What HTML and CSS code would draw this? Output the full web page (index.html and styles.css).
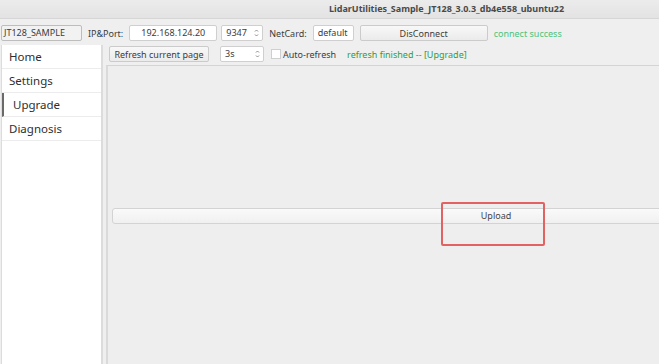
FILE: index.html
```html
<!DOCTYPE html>
<html lang="en">
<head>
    <meta charset="UTF-8">
    <meta name="viewport" content="width=device-width, initial-scale=1.0">
    <title>LidarUtilities</title>
    <link rel="stylesheet" href="styles.css">
</head>
<body>
    <div class="titlebar">LidarUtilities_Sample_JT128_3.0.3_db4e558_ubuntu22</div>

    <div class="toolbar">
        <div class="field model">JT128_SAMPLE</div>
        <span class="label">IP&amp;Port:</span>
        <div class="field ip">192.168.124.20</div>
        <div class="field spin port">9347
            <svg class="arrows" width="5" height="10" viewBox="0 0 5 10"><path d="M1 3.5 L2.5 2 L4 3.5 M1 6.5 L2.5 8 L4 6.5" fill="none" stroke="#8a8a8a" stroke-width="1"/></svg>
        </div>
        <span class="label">NetCard:</span>
        <div class="field netcard">default</div>
        <button class="btn disconnect">DisConnect</button>
        <span class="status connect">connect success</span>
    </div>

    <div class="main">
        <ul class="sidebar">
            <li>Home</li>
            <li>Settings</li>
            <li class="active">Upgrade</li>
            <li>Diagnosis</li>
        </ul>

        <div class="page">
            <div class="page-bar">
                <button class="btn refresh">Refresh current page</button>
                <div class="field spin interval">3s
                    <svg class="arrows" width="5" height="10" viewBox="0 0 5 10"><path d="M1 3.5 L2.5 2 L4 3.5 M1 6.5 L2.5 8 L4 6.5" fill="none" stroke="#8a8a8a" stroke-width="1"/></svg>
                </div>
                <label class="check"><span class="box"></span>Auto-refresh</label>
                <span class="status refreshed">refresh finished -- [Upgrade]</span>
            </div>
            <div class="panel">
                <div class="progress">Upload</div>
                <div class="mark"></div>
            </div>
        </div>
    </div>
</body>
</html>
```

FILE: styles.css
```css
body {
    margin: 0;
    width: 659px;
    height: 364px;
    overflow: hidden;
    background-color: #efefef;
    font-family: "Noto Sans", "DejaVu Sans", sans-serif;
    font-size: 9px;
    color: #3c3c3c;
    display: flex;
    flex-direction: column;
}
.titlebar {
    height: 18px;
    line-height: 18px;
    padding-left: 329px;
    background: linear-gradient(#ececec, #e3e3e3);
    border-bottom: 1px solid #d6d6d6;
    font-weight: bold;
    color: #4a4a4a;
    white-space: nowrap;
}
.toolbar {
    display: flex;
    align-items: center;
    height: 16px;
    margin-top: 6px;
    padding-left: 1px;
}
.field {
    box-sizing: border-box;
    flex-shrink: 0;
    height: 16px;
    line-height: 14px;
    border: 1px solid #cfcfcf;
    border-radius: 2px;
    background-color: #ffffff;
    padding: 0 4px;
    white-space: nowrap;
}
.field.model {
    width: 81px;
    background-color: #f2f2f2;
    border-color: #bdbdbd;
    padding-left: 2px;
}
.label {
    margin: 0 6px 0 6px;
    white-space: nowrap;
}
.field.ip {
    width: 88px;
    text-align: center;
}
.field.spin {
    display: flex;
    align-items: center;
    justify-content: space-between;
    padding-right: 3px;
}
.field.port {
    width: 42px;
    margin-left: 4px;
}
.field.netcard {
    width: 41px;
}
.btn {
    box-sizing: border-box;
    flex-shrink: 0;
    height: 16px;
    padding: 0;
    border: 1px solid #cbcbcb;
    border-radius: 2px;
    background: linear-gradient(#f8f8f8, #ebebeb);
    font-family: inherit;
    font-size: 9px;
    color: #3c3c3c;
}
.btn.disconnect {
    width: 128px;
    margin-left: 6px;
}
.status {
    margin-left: 6px;
    white-space: nowrap;
}
.status.connect {
    color: #4cc37a;
}
.status.refreshed {
    color: #2f9e3b;
    margin-left: 11px;
}
.main {
    flex: 1;
    display: flex;
    margin-top: 4px;
    min-height: 0;
}
.sidebar {
    flex-shrink: 0;
    list-style: none;
    margin: 0 0 0 1px;
    padding: 0;
    width: 99px;
    background-color: #ffffff;
    border-left: 1px solid #dcdcdc;
    border-right: 2px solid #dcdcdc;
    font-size: 11.5px;
    color: #2e2e2e;
}
.sidebar li {
    height: 23px;
    line-height: 23px;
    padding-left: 7px;
    border-bottom: 1px solid #ececec;
}
.sidebar li.active {
    padding-left: 9px;
    border-left: 2px solid #6a6a6a;
}
.page {
    flex: 1;
    min-width: 0;
    display: flex;
    flex-direction: column;
    margin-left: 3px;
}
.page-bar {
    display: flex;
    align-items: center;
    height: 16px;
    padding-left: 3px;
    margin-top: 1px;
}
.btn.refresh {
    width: 100px;
}
.field.interval {
    width: 44px;
    margin-left: 11px;
}
.check {
    display: flex;
    align-items: center;
    margin-left: 7px;
    white-space: nowrap;
}
.check .box {
    width: 8px;
    height: 8px;
    border: 1px solid #cfcfcf;
    background-color: #ffffff;
    margin-right: 2px;
}
.panel {
    position: relative;
    flex: 1;
    overflow: hidden;
    margin-top: 3px;
    border-top: 1px solid #d4d4d4;
    border-left: 2px solid #dadada;
    background-color: #eeeeee;
    padding-top: 142px;
    padding-left: 4px;
}
.progress {
    box-sizing: border-box;
    width: 768px;
    height: 16px;
    line-height: 14px;
    border: 1px solid #d3d3d3;
    border-radius: 3px;
    background: linear-gradient(#fafafa, #f0f0f0);
    text-align: center;
    color: #444444;
}
.mark {
    position: absolute;
    left: 333px;
    top: 136px;
    width: 100px;
    height: 40px;
    border: 2px solid #e26262;
    border-radius: 2px;
}
```
